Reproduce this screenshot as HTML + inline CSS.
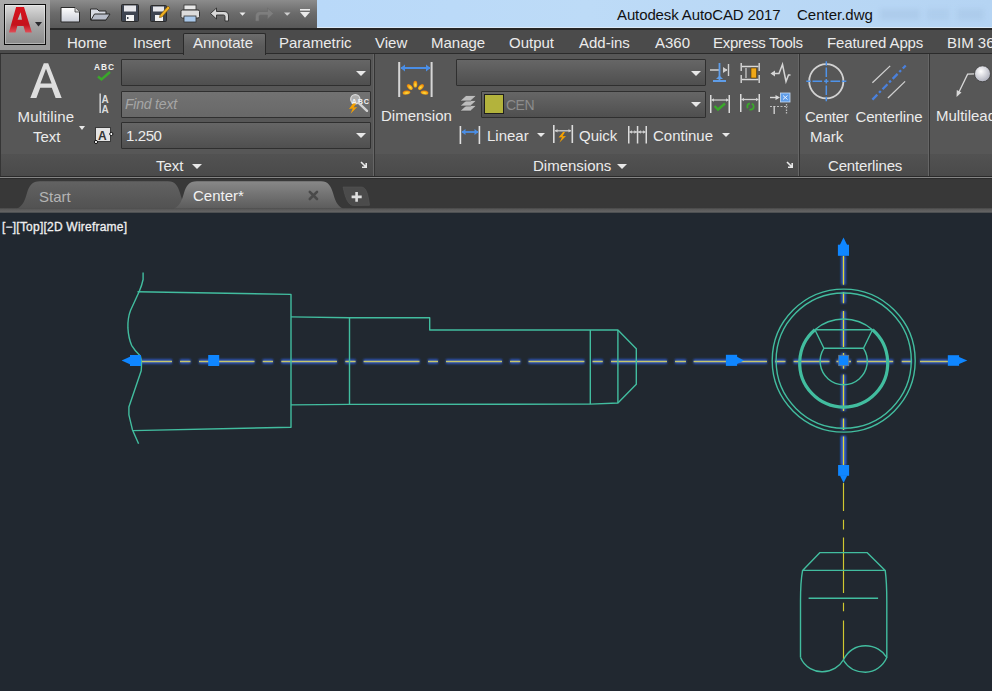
<!DOCTYPE html>
<html><head><meta charset="utf-8">
<style>
*{margin:0;padding:0;box-sizing:border-box}
html,body{width:992px;height:691px;overflow:hidden;background:#212830;font-family:"Liberation Sans",sans-serif}
.a{position:absolute}
.t{position:absolute;white-space:nowrap;color:#ebebeb;font-size:15px;line-height:15px}
svg{position:absolute;overflow:visible}
#title{left:317px;top:0;width:675px;height:28px;background:linear-gradient(90deg,#b9d9f9,#bddbf7 40%,#b5d4f3);border-bottom:1px solid #dbe9f7}
#qat{left:0;top:0;width:317px;height:28px;background:linear-gradient(#8c8c8c,#6c6c6c 45%,#585858)}
#tabrow{left:0;top:28px;width:992px;height:26px;background:#4b4b4b;border-top:2px solid #262626}
#appbg{left:0;top:0;width:50px;height:50px;background:linear-gradient(#a9a9a9,#9a9a9a)}
#appbtn{left:4px;top:4px;width:42px;height:41px;border:1px solid #0c0c0c;background:linear-gradient(#dcdcdc,#a8a8a8 50%,#8a8a8a);box-shadow:inset 0 0 0 1px rgba(255,255,255,.35)}
#acttab{left:182.5px;top:32.5px;width:83.5px;height:22px;background:linear-gradient(#6c6c6c,#5a5a5a 60%,#575757);border:1px solid #2a2a2a;border-bottom:none;border-radius:2px 2px 0 0}
#ribbon{left:0;top:53px;width:992px;height:124px;background:#525252;border-top:1px solid #2b2b2b}
.panel{position:absolute;top:54px;height:122px;background:#575757;border-left:1px solid #353535;box-shadow:inset -1px 0 0 #666}
.ptitle{position:absolute;top:100px;left:0;right:1px;height:22px;background:linear-gradient(#525252,#4a4a4a);}
.combo{position:absolute;height:27px;border:1px solid #2f2f2f;border-radius:1px;background:linear-gradient(#666,#4f4f4f)}
.tri{position:absolute;width:0;height:0;border-left:5px solid transparent;border-right:5px solid transparent;border-top:5px solid #e8e8e8}
#doctabs{left:0;top:177px;width:992px;height:35px;background:#383838;border-top:1px solid #6a6a6a}
#vp{left:0;top:212px;width:992px;height:479px;background:#212830}
</style></head><body>
<div id="title" class="a"></div>
<div class="t" style="left:617px;top:7px;color:#111;letter-spacing:-0.12px">Autodesk AutoCAD 2017</div>
<div class="t" style="left:797px;top:7px;color:#111">Center.dwg</div>
<div class="a" style="left:880px;top:9px;width:104px;height:11px;background:linear-gradient(90deg,rgba(110,140,180,.12) 0 38%,transparent 38% 45%,rgba(110,140,180,.1) 45% 66%,transparent 66% 74%,rgba(110,140,180,.11) 74% 100%);filter:blur(2.5px)"></div>
<div id="qat" class="a"></div>
<div id="tabrow" class="a"></div>
<div class="t" style="left:67px;top:35px">Home</div>
<div class="t" style="left:133px;top:35px">Insert</div>
<div class="t" style="left:279px;top:35px">Parametric</div>
<div class="t" style="left:375px;top:35px">View</div>
<div class="t" style="left:431px;top:35px">Manage</div>
<div class="t" style="left:509px;top:35px">Output</div>
<div class="t" style="left:579px;top:35px">Add-ins</div>
<div class="t" style="left:655px;top:35px">A360</div>
<div class="t" style="left:713px;top:35px;letter-spacing:-0.25px">Express Tools</div>
<div class="t" style="left:827px;top:35px;letter-spacing:-0.1px">Featured Apps</div>
<div class="t" style="left:947px;top:35px">BIM 360</div>
<div id="appbg" class="a"></div>
<div id="appbtn" class="a"></div>

<div id="ribbon" class="a"></div>
<div class="panel" style="left:0;width:374px"><div class="ptitle"></div></div>
<div class="panel" style="left:374px;width:425px"><div class="ptitle"></div></div>
<div class="panel" style="left:799px;width:130px"><div class="ptitle"></div></div>
<div class="panel" style="left:929px;width:64px"><div class="ptitle"></div></div>
<div id="acttab" class="a"></div>
<div class="t" style="left:193px;top:35px">Annotate</div>

<!-- Text panel -->
<div class="t" style="left:17.5px;top:109px;letter-spacing:0.2px">Multiline</div>
<div class="t" style="left:33px;top:129px">Text</div>
<div class="tri" style="left:79px;top:126px;border-width:4px 3px 0 3px"></div>
<div class="combo" style="left:121px;top:59px;width:250px"></div>
<div class="combo" style="left:121px;top:91px;width:250px;background:linear-gradient(#727272,#686868)"></div>
<div class="combo" style="left:121px;top:122px;width:250px"></div>
<div class="t" style="left:125px;top:97px;color:#a6a6a6;font-style:italic;font-size:14px;letter-spacing:-0.2px">Find text</div>
<div class="t" style="left:126px;top:128px;letter-spacing:-0.4px">1.250</div>
<div class="tri" style="left:356px;top:71px"></div>
<div class="tri" style="left:356px;top:133px"></div>
<div class="t" style="left:156px;top:158px">Text</div>
<div class="tri" style="left:192px;top:164px"></div>

<!-- Dimensions panel -->
<div class="t" style="left:381px;top:108px">Dimension</div>
<div class="combo" style="left:456px;top:59px;width:250px"></div>
<div class="combo" style="left:481px;top:91px;width:225px"></div>
<div class="a" style="left:484px;top:94px;width:20px;height:20px;background:#b3b33c;border:1px solid #1e1e1e"></div>
<div class="t" style="left:506px;top:97.5px;color:#8c8c8c;font-size:14px;letter-spacing:-0.5px">CEN</div>
<div class="tri" style="left:691px;top:71px"></div>
<div class="tri" style="left:691px;top:102px"></div>
<div class="t" style="left:487px;top:128px">Linear</div>
<div class="tri" style="left:537px;top:133px;border-width:4px 4px 0 4px"></div>
<div class="t" style="left:579px;top:128px">Quick</div>
<div class="t" style="left:653px;top:128px">Continue</div>
<div class="tri" style="left:722px;top:133px;border-width:4px 4px 0 4px"></div>
<div class="t" style="left:533px;top:158px">Dimensions</div>
<div class="tri" style="left:617px;top:164px"></div>

<!-- Centerlines panel -->
<div class="t" style="left:805px;top:109px;letter-spacing:-0.25px">Center</div>
<div class="t" style="left:810px;top:129px">Mark</div>
<div class="t" style="left:855.5px;top:109px;letter-spacing:-0.15px">Centerline</div>
<div class="t" style="left:828px;top:158px;letter-spacing:-0.15px">Centerlines</div>
<div class="t" style="left:936px;top:108px">Multileader</div>


<svg width="992" height="212" style="left:0;top:0" viewBox="0 0 992 212">
<defs>
<linearGradient id="gred" x1="0" y1="0" x2="0" y2="1"><stop offset="0" stop-color="#d8141e"/><stop offset="0.7" stop-color="#c4121c"/><stop offset="1" stop-color="#e0505a"/></linearGradient>
<linearGradient id="gpaper" x1="0" y1="0" x2="0" y2="1"><stop offset="0" stop-color="#ffffff"/><stop offset="1" stop-color="#c9ccd6"/></linearGradient>
<radialGradient id="gflame" cx="0.5" cy="0.6" r="0.6"><stop offset="0" stop-color="#ffe640"/><stop offset="1" stop-color="#e87a00"/></radialGradient>
<radialGradient id="gsph" cx="0.4" cy="0.35" r="0.7"><stop offset="0" stop-color="#ffffff"/><stop offset="1" stop-color="#a9abb8"/></radialGradient>
</defs>
<!-- app A -->
<path d="M8.9,32.6 L16.1,6.9 L24,6.9 L31.9,32.6 L25.4,32.6 L23.5,26.1 L17.3,26.1 L15.6,32.6 Z M17.6,19.8 L22,19.8 L20.6,12.3 Z" fill="url(#gred)" fill-rule="evenodd"/>
<path d="M35,22 L42,22 L38.5,26.5 Z" fill="#2a2a2e"/>
<!-- QAT new -->
<path d="M61,7.5 L75,7.5 L79.5,12 L79.5,22 L61,22 Z" fill="url(#gpaper)" stroke="#2b2b2b" stroke-width="1"/>
<path d="M75,7.5 L75,12 L79.5,12" fill="#d8d8d8" stroke="#3a3a3a" stroke-width="0.8"/>
<!-- open -->
<path d="M90.5,9 L97,9 L99,11 L106,11 L106,20 L90.5,20 Z" fill="#d8dbe4" stroke="#2b2b2b" stroke-width="1"/>
<path d="M91,20 L94.5,14 L110,14 L106,20 Z" fill="#b7bcc9" stroke="#2b2b2b" stroke-width="1"/>
<!-- save -->
<rect x="121.5" y="4.5" width="17" height="17" rx="1" fill="#3e4450" stroke="#2a2a2a"/>
<rect x="124" y="5.5" width="12" height="6" fill="#e6e6ea"/>
<rect x="126" y="15" width="8" height="6" fill="#f2f2f2"/>
<rect x="127" y="17" width="1.5" height="2" fill="#3e4450"/>
<!-- saveas -->
<rect x="150.5" y="5.5" width="16" height="16" rx="1" fill="#3e4450" stroke="#2a2a2a"/>
<rect x="153" y="6.5" width="11" height="5" fill="#e6e6ea"/>
<rect x="155" y="15" width="8" height="6" fill="#f2f2f2"/>
<path d="M160,15 L168,6 L170,8 L162,17 L159.5,17.5 Z" fill="#f0b020" stroke="#6a4a10" stroke-width="0.6"/>
<!-- print -->
<rect x="184" y="5" width="12" height="5" fill="#e8e8e8" stroke="#333" stroke-width="0.8"/>
<rect x="181" y="10" width="18.5" height="8" rx="1.5" fill="#dcdcdc" stroke="#333" stroke-width="1"/>
<rect x="184" y="16" width="12" height="6" fill="#a9c8ea" stroke="#333" stroke-width="0.8"/>
<!-- undo -->
<path d="M210.5,13.5 L216.5,8 L216.5,11.5 L224,11.5 Q228.5,11.5 228.5,16 L228.5,21 L225,21 L225,16.5 Q225,15 223.5,15 L216.5,15 L216.5,19 Z" fill="#d8d8d8" stroke="#2e2e2e" stroke-width="0.9"/>
<path d="M239.5,12.5 L245.5,12.5 L242.5,15.8 Z" fill="#ececec"/>
<!-- redo -->
<path d="M273.5,13.5 L267.5,8 L267.5,11.5 L260,11.5 Q255.5,11.5 255.5,16 L255.5,21 L259,21 L259,16.5 Q259,15 260.5,15 L267.5,15 L267.5,19 Z" fill="#7e7e7e" stroke="#6a6a6a" stroke-width="0.6"/>
<path d="M284,12.5 L290.5,12.5 L287.2,15.8 Z" fill="#cfcfcf"/>
<!-- customize -->
<rect x="300" y="9" width="10" height="1.6" fill="#eaeaea"/>
<path d="M300,12 L310,12 L305,17.7 Z" fill="#eaeaea"/>

<!-- big A -->
<path d="M30.3,98 L43.8,63.2 L48.2,63.2 L61.7,98 L55.6,98 L51.8,87.8 L40.2,87.8 L36.4,98 Z M40.4,83.6 L51.6,83.6 L46,68.8 Z" fill="#dedede" fill-rule="evenodd"/>
<!-- ABC check -->
<text x="94" y="70.3" font-family="Liberation Sans" font-weight="bold" font-size="8.3" fill="#f2f2f2" textLength="20" lengthAdjust="spacing">ABC</text>
<path d="M98,76.5 L101.5,79.5 L110,72" fill="none" stroke="#3aa82a" stroke-width="2.4"/>
<!-- text height -->
<rect x="99.5" y="93.5" width="1.3" height="19.5" fill="#e6e6e6"/>
<text x="101.5" y="102.8" font-family="Liberation Sans" font-weight="bold" font-size="10" fill="#dcdcdc">A</text>
<text x="101.5" y="112.8" font-family="Liberation Sans" font-weight="bold" font-size="10" fill="#dcdcdc">A</text>
<!-- A box -->
<rect x="95.5" y="127.5" width="15" height="14" fill="#e4e4e4" stroke="#3a3a3a" stroke-width="1"/>
<text x="98" y="139.5" font-family="Liberation Sans" font-weight="bold" font-size="12" fill="#333">A</text>
<circle cx="96" cy="142" r="1.6" fill="#fff" stroke="#111" stroke-width="1"/>
<circle cx="111.3" cy="134" r="1.6" fill="#fff" stroke="#111" stroke-width="1"/>
<!-- find magnifier -->
<circle cx="355.3" cy="99.3" r="4.6" fill="rgba(225,225,225,0.55)" stroke="#dadada" stroke-width="1.3"/>
<text x="351.5" y="104" font-family="Liberation Sans" font-weight="bold" font-size="7.2" fill="#f4f4f4" textLength="17.5">ABC</text>
<path d="M358.6,102.8 L367,110.8" stroke="#d4d4d4" stroke-width="2.4" stroke-linecap="round"/>
<path d="M353,103.5 L349,109 L352.8,108.6 L350.6,113.8 L357.2,107 L353.6,107.4 L356.2,103.5 Z" fill="#f5a000"/>
<!-- Dimension icon -->
<rect x="398.2" y="62" width="2" height="35" fill="#d6d6d6"/>
<rect x="430.6" y="62" width="2" height="35" fill="#d6d6d6"/>
<path d="M401,68 L430,68" stroke="#4a8ee6" stroke-width="2"/>
<path d="M400.5,68 L405,64.5 L405,71.5 Z M430.5,68 L426,64.5 L426,71.5 Z" fill="#4a8ee6"/>
<g fill="url(#gflame)">
<ellipse cx="406.5" cy="92.6" rx="3.9" ry="2" transform="rotate(-8 406.5 92.6)"/>
<ellipse cx="409.8" cy="87" rx="2.1" ry="3.5" transform="rotate(-45 409.8 87)"/>
<ellipse cx="415.3" cy="84.2" rx="2" ry="3.4"/>
<ellipse cx="421" cy="87" rx="2.1" ry="3.5" transform="rotate(45 421 87)"/>
<ellipse cx="424.5" cy="92.6" rx="3.9" ry="2" transform="rotate(8 424.5 92.6)"/>
</g>
<!-- layer icon -->
<g fill="#bdbdbd" stroke="#4a4a4a" stroke-width="0.7">
<path d="M460,111 L466,105.5 L476.5,105.5 L470.5,111 Z"/>
<path d="M460,106 L466,100.5 L476.5,100.5 L470.5,106 Z"/>
<path d="M460,101 L466,95.5 L476.5,95.5 L470.5,101 Z"/>
</g>
<!-- linear -->
<rect x="459.6" y="126" width="1.6" height="18" fill="#e0e0e0"/>
<rect x="478.6" y="126" width="1.6" height="18" fill="#e0e0e0"/>
<path d="M462,132 L478,132" stroke="#4a8ee6" stroke-width="1.8"/>
<path d="M461.5,132 L465.5,129 L465.5,135 Z M478.5,132 L474.5,129 L474.5,135 Z" fill="#4a8ee6"/>
<!-- quick -->
<rect x="553" y="125" width="1.6" height="18" fill="#dcdcdc"/>
<rect x="571.5" y="125" width="1.6" height="18" fill="#dcdcdc"/>
<path d="M555,130.8 L571,130.8" stroke="#cfcfcf" stroke-width="1.3"/>
<path d="M555,130.8 L557.5,129 L557.5,132.6 Z M571,130.8 L568.5,129 L568.5,132.6 Z" fill="#cfcfcf"/>
<path d="M563,132 L558.5,137.5 L562,137.3 L559.5,142.5 L566,136 L562.5,136.2 L565,132 Z" fill="#f5a000"/>
<!-- continue -->
<rect x="628" y="126" width="1.5" height="17.5" fill="#dcdcdc"/>
<rect x="636.8" y="126" width="1.5" height="17.5" fill="#dcdcdc"/>
<rect x="645.5" y="126" width="1.5" height="17.5" fill="#dcdcdc"/>
<path d="M629.5,132 L645.5,132" stroke="#cfcfcf" stroke-width="1.3"/>
<path d="M629.5,132 L632,130.3 L632,133.7 Z M636.8,132 L634.3,130.3 L634.3,133.7 Z M638.3,132 L640.8,130.3 L640.8,133.7 Z M645.5,132 L643,130.3 L643,133.7 Z" fill="#cfcfcf"/>

<!-- small icons row 1 -->
<g>
<path d="M710,70 L720,70 M723,70 L727,70" stroke="#d0d0d0" stroke-width="1.4"/>
<path d="M727.5,70 L723,67 L723,73 Z" fill="#d0d0d0"/>
<rect x="727.8" y="64" width="1.4" height="12" fill="#d0d0d0"/>
<rect x="718.6" y="63" width="1.8" height="17" fill="#5f9de8"/>
<rect x="713" y="80" width="13" height="2" fill="#5f9de8"/>
<path d="M716,79 L719.5,75.5 L723,79 Z" fill="#5f9de8"/>
</g>
<g>
<rect x="740.5" y="63" width="1.4" height="8" fill="#d8d8d8"/>
<rect x="758.5" y="63" width="1.4" height="8" fill="#d8d8d8"/>
<rect x="740.5" y="75" width="1.4" height="8" fill="#d8d8d8"/>
<rect x="758.5" y="75" width="1.4" height="8" fill="#d8d8d8"/>
<path d="M742,66.5 L758.5,66.5 M742,79.5 L758.5,79.5" stroke="#d8d8d8" stroke-width="1.3"/>
<path d="M746,68 L746,78" stroke="#c8c8c8" stroke-width="1.3"/>
<rect x="751" y="68" width="5.5" height="10" fill="#f0a818" stroke="#5a3a00" stroke-width="0.6"/>
</g>
<g fill="none" stroke="#d4d4d4" stroke-width="1.5">
<path d="M772,73.5 L779,73.5 L782.5,64.5 L786,81.5 L788.5,75 L790.5,75"/>
</g>
<path d="M770.5,73.5 L775,70.5 L775,76.5 Z" fill="#d4d4d4"/>
<!-- row 2 -->
<g>
<rect x="710" y="95" width="1.5" height="18" fill="#dcdcdc"/>
<rect x="728.5" y="95" width="1.5" height="18" fill="#dcdcdc"/>
<path d="M711.5,100 L728.5,100" stroke="#cfcfcf" stroke-width="1.3"/>
<path d="M711.5,100 L714,98.3 L714,101.7 Z M728.5,100 L726,98.3 L726,101.7 Z" fill="#cfcfcf"/>
<path d="M714.5,106 L718,109.5 L725,103.5" fill="none" stroke="#3aa82a" stroke-width="2.4"/>
</g>
<g>
<rect x="740" y="94" width="1.5" height="18" fill="#dcdcdc"/>
<rect x="758.5" y="94" width="1.5" height="18" fill="#dcdcdc"/>
<path d="M741.5,99.5 L758.5,99.5" stroke="#cfcfcf" stroke-width="1.3"/>
<path d="M741.5,99.5 L744,97.8 L744,101.2 Z M758.5,99.5 L756,97.8 L756,101.2 Z" fill="#cfcfcf"/>
<circle cx="750.5" cy="106.5" r="3.2" fill="none" stroke="#3aa82a" stroke-width="1.8" stroke-dasharray="6 2"/>
</g>
<g>
<path d="M770,97.5 L778,97.5" stroke="#d8d8d8" stroke-width="1.4"/>
<path d="M780,97.5 L775.5,95 L775.5,100 Z" fill="#d8d8d8"/>
<rect x="780.5" y="93" width="9.5" height="9" fill="#5f9de8" stroke="#c8dcf5" stroke-width="0.8"/>
<path d="M783,95.5 L787.5,99.5 M787.5,95.5 L783,99.5" stroke="#e8f0ff" stroke-width="1"/>
<path d="M770,106.5 L788,106.5" stroke="#bdbdbd" stroke-width="1.2" stroke-dasharray="2 1.5"/>
<rect x="773.5" y="106" width="1.4" height="8" fill="#cfcfcf"/>
<path d="M786.5,104 L786.5,114" stroke="#bdbdbd" stroke-width="1.3" stroke-dasharray="1.5 1.2"/>
</g>
<!-- center mark -->
<circle cx="826.3" cy="81.2" r="17.1" fill="none" stroke="#d2d2d2" stroke-width="1.8"/>
<path d="M826.3,61.2 L826.3,65.7 M806.3,81.2 L810.8,81.2 M826.3,67.4 L826.3,77.0 M812.5,81.2 L822.0999999999999,81.2 M826.3,79.0 L826.3,83.4 M824.0999999999999,81.2 L828.5,81.2 M826.3,85.4 L826.3,95.0 M830.5,81.2 L840.0999999999999,81.2 M826.3,96.7 L826.3,101.2 M841.8,81.2 L846.3,81.2 " stroke="#4f93ea" stroke-width="1.5"/>
<!-- centerline -->
<path d="M872.4,82.8 L890.2,65.9 M887.9,98 L905.1,81.4" stroke="#cfcfcf" stroke-width="1.3"/>
<path d="M872.4,99.6 L905.7,65.5" stroke="#4a80dc" stroke-width="2.3" stroke-dasharray="7 2.5 2.5 2.5"/>
<!-- multileader -->
<path d="M974.6,73.8 L967.6,74.2 L958,94" fill="none" stroke="#d8d8d8" stroke-width="1.3"/>
<path d="M956.5,97 L956.8,90 L961.5,92.5 Z" fill="#d8d8d8"/>
<circle cx="982.5" cy="73.8" r="8" fill="url(#gsph)" stroke="#3a3a3a" stroke-width="0.8"/>
<!-- launchers -->
<path d="M361,162 L366,167 M366.2,163 L366.2,167.2 L362,167.2" stroke="#e8e8e8" stroke-width="1.6" fill="none"/>
<path d="M787,162 L792,167 M792.2,163 L792.2,167.2 L788,167.2" stroke="#e8e8e8" stroke-width="1.6" fill="none"/>
</svg>
<div id="doctabs" class="a"></div>
<div id="vp" class="a"></div>
<svg width="992" height="691" style="left:0;top:0" viewBox="0 0 992 691">
<defs>
<linearGradient id="gtabA" x1="0" y1="0" x2="0" y2="1"><stop offset="0" stop-color="#888888"/><stop offset="1" stop-color="#5c5c5c"/></linearGradient>
<linearGradient id="gtabS" x1="0" y1="0" x2="0" y2="1"><stop offset="0" stop-color="#626262"/><stop offset="1" stop-color="#525252"/></linearGradient>
<linearGradient id="gstrip" x1="0" y1="0" x2="0" y2="1"><stop offset="0" stop-color="#545454"/><stop offset="1" stop-color="#686868"/></linearGradient>
</defs>
<!-- doc tabs -->
<rect x="0" y="176" width="992" height="1" fill="#2a2a2a"/>
<rect x="0" y="177" width="992" height="1" fill="#858585"/>
<rect x="0" y="178" width="992" height="1" fill="#2c2c2c"/>
<path d="M17,208.5 C23,206 25,200 27,193 C29,186 32,181.3 40,181.3 L168,181.3 C175,181.3 178,186 180,193 C182,200 184,206 190,208.5 Z" fill="url(#gtabS)"/>
<path d="M174,208.5 C180,206 182,200 184,193 C186,186 189,181.3 197,181.3 L321,181.3 C328,181.3 331,186 333,193 C335,200 337,206 343,208.5 Z" fill="url(#gtabA)"/>
<path d="M343.1,187 L361,187 C366,187 368,193 369.5,205.3 L353.5,205.5 C348,205.5 345,197 343.1,187 Z" fill="#4b4b4b" stroke="#555" stroke-width="0.6"/>
<path d="M351.6,196.9 L361.7,196.9 M356.6,192 L356.6,201.8" stroke="#dedede" stroke-width="2.6"/>
<path d="M309.8,191.8 L317,199 M317,191.8 L309.8,199" stroke="#4a4a4a" stroke-width="2.6" stroke-linecap="round"/>
<rect x="0" y="208.3" width="992" height="4.5" fill="url(#gstrip)"/>
<rect x="0" y="212.8" width="992" height="479" fill="#212830"/>
</svg>
<div class="t" style="left:39px;top:188.5px;color:#b4b4b4">Start</div>
<div class="t" style="left:193px;top:188.3px;color:#f2f2f2">Center*</div>
<div class="t" style="left:2px;top:220.5px;font-size:12px;line-height:12px;color:#f0f0f0;-webkit-text-stroke:0.3px #f0f0f0;letter-spacing:0.22px">[&minus;][Top][2D Wireframe]</div>


<svg width="992" height="691" style="left:0;top:0" viewBox="0 0 992 691">

<defs><filter id="blur1" filterUnits="userSpaceOnUse" x="0" y="200" width="992" height="491"><feGaussianBlur stdDeviation="0.9"/></filter></defs>
<g fill="none" stroke-linecap="butt">
<path d="M130,361.5 L172,361.5 M180,361.5 L190.5,361.5 M199,361.5 L254.5,361.5 M262.7,361.5 L273,361.5 M281.3,361.5 L337,361.5 M345.3,361.5 L355.6,361.5 M363.6,361.5 L419.5,361.5 M428,361.5 L438,361.5 M446,361.5 L502,361.5 M510,361.5 L520.3,361.5 M528.5,361.5 L584.4,361.5 M592.5,361.5 L602.8,361.5 M611,361.5 L667,361.5 M675,361.5 L686,361.5 M693.6,361.5 L767,361.5 M775,361.5 L785.5,361.5 M793.6,361.5 L829.5,361.5 M836.4,361.5 L851,361.5 M856.8,361.5 L893.2,361.5 M901.7,361.5 L911.7,361.5 M920,361.5 L948,361.5 " stroke="#2d58c8" stroke-width="4.6" stroke-linecap="butt" filter="url(#blur1)"/>
<path d="M130,361.5 L172,361.5 M180,361.5 L190.5,361.5 M199,361.5 L254.5,361.5 M262.7,361.5 L273,361.5 M281.3,361.5 L337,361.5 M345.3,361.5 L355.6,361.5 M363.6,361.5 L419.5,361.5 M428,361.5 L438,361.5 M446,361.5 L502,361.5 M510,361.5 L520.3,361.5 M528.5,361.5 L584.4,361.5 M592.5,361.5 L602.8,361.5 M611,361.5 L667,361.5 M675,361.5 L686,361.5 M693.6,361.5 L767,361.5 M775,361.5 L785.5,361.5 M793.6,361.5 L829.5,361.5 M836.4,361.5 L851,361.5 M856.8,361.5 L893.2,361.5 M901.7,361.5 L911.7,361.5 M920,361.5 L948,361.5 " stroke="#c6c66a" stroke-width="1.5"/>
<path d="M843.5,436 L843.5,465" stroke="#2d58c8" stroke-width="4.6" stroke-linecap="butt" filter="url(#blur1)"/>
<path d="M843.5,255.8 L843.5,284.8 M843.5,291.9 L843.5,303.2 M843.5,311.1 L843.5,347.1 M843.5,353 L843.5,368.7 M843.5,374.6 L843.5,410.9 M843.5,418.6 L843.5,429.9 M843.5,436.4 L843.5,465 " stroke="#2d58c8" stroke-width="4.6" stroke-linecap="butt" filter="url(#blur1)"/>
<path d="M843.5,255.8 L843.5,284.8 M843.5,291.9 L843.5,303.2 M843.5,311.1 L843.5,347.1 M843.5,353 L843.5,368.7 M843.5,374.6 L843.5,410.9 M843.5,418.6 L843.5,429.9 M843.5,436.4 L843.5,465 " stroke="#e0d838" stroke-width="1.3"/>
<path d="M843.5,483 L843.5,510.9 M843.5,519.8 L843.5,529.5 M843.5,537.6 L843.5,593.1 M843.5,602.8 L843.5,611.3 M843.5,620.6 L843.5,660 " stroke="#d0c830" stroke-width="1.15"/>
</g>
<g fill="none" stroke="#42bd9f" stroke-width="1.4" stroke-linejoin="round">
<path d="M143.1,272.5 L143.1,279.5 Q142,285 139.1,291.8 L130.5,310.5 Q127.6,318 127.9,327.9 Q128.5,338 131.6,345.3 Q135,351 140.4,356 Q142,362 141.2,370.8 L128.9,406.9 L128.9,414.9 L132.4,429.7 L138.6,443.8"/>
<path d="M137.5,291.8 L291,294.4 L291,427.3 L132.8,430.6"/>
<path d="M291,316.9 L349.5,317.8 L429.7,317.8 L429.7,330 L617.9,330 L636.3,348.7 L636.3,384.3 L617.9,403 L590.3,404.1 L349.5,404.4 L291,404.9"/>
<path d="M349.5,317.8 L349.5,404.4 M590.3,330 L590.3,404.1 M617.9,330 L617.9,403"/>
<circle cx="843.7" cy="360.6" r="71.5"/>
<circle cx="843.7" cy="360.6" r="67.6"/>
<path d="M814.9,329.8 A44,44 0 0 1 872.5,329.8"/>
<path d="M814.9,329.8 A44,44 0 1 0 872.5,329.8" stroke-width="3.2"/>
<path d="M814.9,329.8 L872.5,329.8 L863.5,348.3 L823.9,348.3 Z"/>
<path d="M823.9,348.3 A23.6,23.6 0 1 0 863.5,348.3"/>
<path d="M820,552.6 L867,552.6 L885.2,570.4 L802.6,570.4 Z"/>
<path d="M802.6,570.4 C800.8,580 800.5,590 800.5,601 L800.5,657.5 M885.2,570.4 C886.5,580 886.8,590 886.8,601 L886.8,657.5"/>
<path d="M808.6,598.3 L878.1,598.3"/>
<path d="M800.5,657.5 C805,668 815,672 822.4,671.8 C832,671.5 840,666 843.3,660"/>
<path d="M843.3,660 C848,651 856,645.8 865.5,645.8 C875,645.8 883,651 886.8,657.5 C883,666 875,672.2 865.5,672.2 C856,672.2 848,668 843.3,660"/>
</g>
<g fill="#0f86ff">
<rect x="130" y="355" width="11" height="11"/><path d="M121.6,360.5 L130.5,356.5 L130.5,364.5 Z"/>
<rect x="208.2" y="355" width="11" height="11"/>
<rect x="725.9" y="354.8" width="11.2" height="11.1"/><path d="M744,360.4 L736.5,356.6 L736.5,364.2 Z"/>
<rect x="947.8" y="355.2" width="11.3" height="10.6"/><path d="M967.3,360.5 L958.5,356.7 L958.5,364.3 Z"/>
<rect x="837.9" y="244.7" width="11.1" height="11.1"/><path d="M843.5,237.6 L839.7,245.2 L847.3,245.2 Z"/>
<rect x="838.1" y="465" width="11" height="10.8"/><path d="M843.6,482.9 L839.8,475.3 L847.4,475.3 Z"/>
<rect x="838.7" y="355.3" width="10" height="10.4" stroke="#6a7a8a" stroke-width="0.8"/>
</g>
</svg>
</body></html>
